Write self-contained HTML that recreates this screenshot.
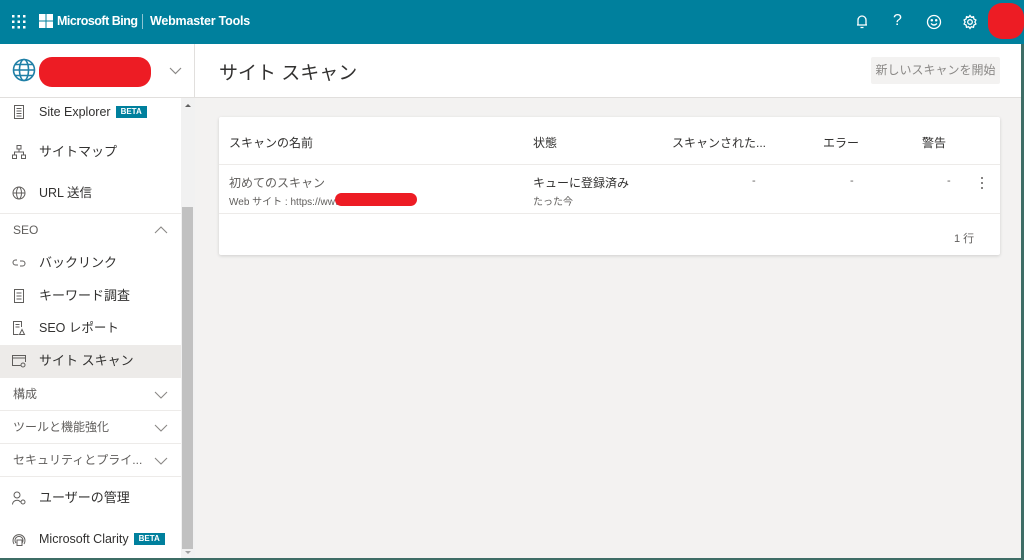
<!DOCTYPE html>
<html><head><meta charset="utf-8"><style>
*{box-sizing:border-box;margin:0;padding:0}
body{width:1024px;height:560px;overflow:hidden;font-family:"Liberation Sans","Noto Sans CJK JP",sans-serif;background:#f3f2f1;position:relative;color:#323130}
.hdr{position:absolute;left:0;top:0;width:1024px;height:44px;background:#00809d;color:#fff}
.abs{position:absolute}
.side{position:absolute;left:0;top:44px;width:195px;height:516px;background:#fff;border-right:1px solid #e1dfdd}
.sub{position:absolute;left:195px;top:44px;width:829px;height:54px;background:#fff;border-bottom:1px solid #e1dfdd}
.item{position:absolute;left:0;width:181px;height:18px;font-size:12.5px;line-height:18px;color:#323130}
.item .ic{position:absolute;left:12px;top:2px;width:14px;height:14px}
.item .t{position:absolute;left:39px;top:0;white-space:nowrap}
.beta{display:inline-block;background:#00809d;color:#fff;font-size:8px;line-height:10px;font-weight:bold;padding:1px 5px;margin-left:5px;vertical-align:2px}
.sep{position:absolute;left:0;width:181px;height:1px;background:#edebe9}
.chev{position:absolute;left:154px;width:14px;height:8px}
.card{position:absolute;left:219px;top:117px;width:781px;height:138px;background:#fff;box-shadow:0 1px 3px rgba(0,0,0,.15);border-radius:2px}
.th{position:absolute;top:17px;font-size:12px;color:#323130}
.line{position:absolute;left:0;width:781px;height:1px;background:#edebe9}
</style></head><body>
<div class="hdr">
<svg class="abs" style="left:12px;top:15px" width="14" height="14" fill="#fff"><g><rect x="0" y="0" width="2.5" height="2.5"/><rect x="5.5" y="0" width="2.5" height="2.5"/><rect x="11" y="0" width="2.5" height="2.5"/><rect x="0" y="5.5" width="2.5" height="2.5"/><rect x="5.5" y="5.5" width="2.5" height="2.5"/><rect x="11" y="5.5" width="2.5" height="2.5"/><rect x="0" y="11" width="2.5" height="2.5"/><rect x="5.5" y="11" width="2.5" height="2.5"/><rect x="11" y="11" width="2.5" height="2.5"/></g></svg>
<svg class="abs" style="left:39px;top:14px" width="14" height="14" fill="#fff"><rect x="0" y="0" width="6.5" height="6.5"/><rect x="7.5" y="0" width="6.5" height="6.5"/><rect x="0" y="7.5" width="6.5" height="6.5"/><rect x="7.5" y="7.5" width="6.5" height="6.5"/></svg>
<div class="abs" style="left:57px;top:14px;font-size:12.5px;font-weight:bold;letter-spacing:-0.5px;white-space:nowrap">Microsoft Bing</div>
<div class="abs" style="left:142px;top:14px;width:1px;height:15px;background:#8cc4d2"></div>
<div class="abs" style="left:150px;top:14px;font-size:12.5px;font-weight:bold;letter-spacing:-0.2px;white-space:nowrap">Webmaster Tools</div>
<svg class="abs" style="left:856px;top:15px" width="12" height="14" fill="none" stroke="#fff" stroke-width="1.3"><path d="M2 10V5a4 4 0 0 1 8 0v5H2z M1 10h10 M4.5 12.5h3"/></svg>
<div class="abs" style="left:893px;top:12px;font-size:16px">?</div>
<svg class="abs" style="left:926px;top:14px" width="16" height="16" fill="none" stroke="#fff" stroke-width="1.3"><circle cx="8" cy="8" r="6.5"/><circle cx="5.8" cy="6.3" r=".6" fill="#fff"/><circle cx="10.2" cy="6.3" r=".6" fill="#fff"/><path d="M5 9.5q3 3 6 0"/></svg>
<svg class="abs" style="left:962px;top:14px" width="16" height="16" fill="none" stroke="#fff" stroke-width="1.3"><circle cx="8" cy="8" r="2.3"/><path d="M8 1.5l1.3 1.8 2.2-.6.4 2.2 2 1.1-1 2 1 2-2 1.1-.4 2.2-2.2-.6L8 14.5l-1.3-1.8-2.2.6-.4-2.2-2-1.1 1-2-1-2 2-1.1.4-2.2 2.2.6z"/></svg>
<div class="abs" style="left:988px;top:3px;width:36px;height:36px;border-radius:14px;background:#ed1c24"></div>
</div>
<div class="side">
<svg class="abs" style="left:12px;top:14px" width="24" height="24" fill="none" stroke="#1f7fa6" stroke-width="1.6"><circle cx="12" cy="12" r="10.5"/><ellipse cx="12" cy="12" rx="4.5" ry="10.5"/><path d="M1.5 12h21M3.5 6.5h17M3.5 17.5h17"/></svg>
<div class="abs" style="left:39px;top:13px;width:112px;height:30px;border-radius:13px;background:#ed1c24"></div>
<svg class="abs" style="left:169px;top:23px" width="13" height="8" fill="none" stroke="#8a8886" stroke-width="1.2"><path d="M1 1l5.5 5.5L12 1"/></svg>
<div class="abs" style="left:0;top:53px;width:195px;height:1px;background:#e1dfdd"></div>
<div class="abs" style="left:181px;top:54px;width:14px;height:462px;background:#f1f1f1"></div>
<div class="abs" style="left:182px;top:163px;width:11px;height:342px;background:#c1c1c1"></div>
<div class="abs" style="left:185px;top:57px;width:0;height:0;border:3px solid transparent;border-bottom:3px solid #606060"></div>
<div class="abs" style="left:185px;top:507px;width:0;height:0;border:3px solid transparent;border-top:3px solid #a0a0a0"></div>

<div class="item" style="top:59px"><svg class="ic" fill="none" stroke="#605e5c"><rect x="2.5" y=".5" width="9" height="13"/><path d="M4.5 3.5h5M4.5 6h5M4.5 8.5h5M4.5 11h5"/></svg><span class="t">Site Explorer<span class="beta">BETA</span></span></div>
<div class="item" style="top:99px"><svg class="ic" fill="none" stroke="#605e5c"><rect x="5" y=".5" width="4" height="3.5"/><rect x=".5" y="10" width="4" height="3.5"/><rect x="9.5" y="10" width="4" height="3.5"/><path d="M7 4v3M2.5 10V7h9v3"/></svg><span class="t" style="font-size:13px">サイトマップ</span></div>
<div class="item" style="top:140px"><svg class="ic" fill="none" stroke="#605e5c"><circle cx="7" cy="7" r="6"/><ellipse cx="7" cy="7" rx="2.5" ry="6"/><path d="M1 7h12"/></svg><span class="t">URL 送信</span></div>
<div class="sep" style="top:169px"></div>
<div class="item" style="top:177px;color:#605e5c;font-size:12px"><span class="t" style="left:13px">SEO</span></div>
<svg class="chev" style="top:182px" fill="none" stroke="#8a8886" stroke-width="1.1"><path d="M1 7l6-6 6 6"/></svg>
<div class="item" style="top:210px"><svg class="ic" fill="none" stroke="#605e5c"><path d="M5 4H3.5a2.5 2.5 0 0 0 0 5H6M8 5h2.5a2.5 2.5 0 0 1 0 5H8"/></svg><span class="t" style="font-size:13px">バックリンク</span></div>
<div class="item" style="top:243px"><svg class="ic" fill="none" stroke="#605e5c"><rect x="2.5" y=".5" width="9" height="13"/><path d="M4.5 4h5M4.5 7h5M4.5 10h5"/></svg><span class="t" style="font-size:13px">キーワード調査</span></div>
<div class="item" style="top:275px"><svg class="ic" fill="none" stroke="#605e5c"><path d="M9.5 6V.5h-8v13h5M3.5 3.5h4M3.5 6h4"/><path d="M7.5 13.5l2.5-5 2.5 5z"/></svg><span class="t">SEO レポート</span></div>
<div class="abs" style="left:0;top:301px;width:181px;height:33px;background:#edebe9"></div>
<div class="item" style="top:308px"><svg class="ic" fill="none" stroke="#605e5c"><path d="M13.5 8V1.5H.5v10h8M.5 4h13"/><circle cx="11" cy="11" r="2"/></svg><span class="t" style="font-size:13px">サイト スキャン</span></div>
<div class="item" style="top:341px;color:#605e5c;font-size:12px"><span class="t" style="left:13px">構成</span></div>
<svg class="chev" style="top:347px" fill="none" stroke="#8a8886" stroke-width="1.1"><path d="M1 1l6 6 6-6"/></svg>
<div class="sep" style="top:366px"></div>
<div class="item" style="top:374px;color:#605e5c;font-size:12px"><span class="t" style="left:13px">ツールと機能強化</span></div>
<svg class="chev" style="top:380px" fill="none" stroke="#8a8886" stroke-width="1.1"><path d="M1 1l6 6 6-6"/></svg>
<div class="sep" style="top:399px"></div>
<div class="item" style="top:407px;color:#605e5c;font-size:12px"><span class="t" style="left:13px">セキュリティとプライ...</span></div>
<svg class="chev" style="top:413px" fill="none" stroke="#8a8886" stroke-width="1.1"><path d="M1 1l6 6 6-6"/></svg>
<div class="sep" style="top:432px"></div>
<div class="item" style="top:445px"><svg class="ic" fill="none" stroke="#605e5c"><circle cx="5" cy="4" r="3"/><path d="M.5 13.5a4.5 4.5 0 0 1 8-2.5"/><circle cx="11" cy="11" r="2"/></svg><span class="t" style="font-size:13px">ユーザーの管理</span></div>
<div class="item" style="top:486px"><svg class="ic" fill="none" stroke="#605e5c"><path d="M2 12A6 6 0 1 1 12 12M4 11a4 4 0 1 1 6 0"/><rect x="5" y="8" width="5" height="5.5"/></svg><span class="t">Microsoft Clarity<span class="beta">BETA</span></span></div>
</div>
<div class="sub">
<div class="abs" style="left:24px;top:14px;font-size:19px;color:#323130">サイト スキャン</div>
<div class="abs" style="left:676px;top:13px;width:129px;height:27px;background:#f3f2f1;border-radius:2px;color:#8a8886;font-size:12px;text-align:center;line-height:27px">新しいスキャンを開始</div>
</div>
<div class="card">
<div class="th" style="left:10px">スキャンの名前</div>
<div class="th" style="left:314px">状態</div>
<div class="th" style="left:453px">スキャンされた...</div>
<div class="th" style="left:604px">エラー</div>
<div class="th" style="left:703px">警告</div>
<div class="line" style="top:47px"></div>
<div class="abs" style="left:10px;top:57px;font-size:12px;color:#605e5c">初めてのスキャン</div>
<div class="abs" style="left:10px;top:76px;font-size:10px;color:#605e5c">Web サイト : https://www.</div>
<div class="abs" style="left:116px;top:76px;width:82px;height:13px;border-radius:7px;background:#ed1c24"></div>
<div class="abs" style="left:314px;top:57px;font-size:12px;color:#323130">キューに登録済み</div>
<div class="abs" style="left:314px;top:76px;font-size:10px;color:#605e5c">たった今</div>
<div class="abs" style="left:533px;top:58px;font-size:11px;color:#605e5c">-</div>
<div class="abs" style="left:631px;top:58px;font-size:11px;color:#605e5c">-</div>
<div class="abs" style="left:728px;top:58px;font-size:11px;color:#605e5c">-</div>
<svg class="abs" style="left:761px;top:59px" width="4" height="14" fill="#605e5c"><circle cx="2" cy="2" r="1"/><circle cx="2" cy="7" r="1"/><circle cx="2" cy="12" r="1"/></svg>
<div class="line" style="top:96px"></div>
<div class="abs" style="left:735px;top:113px;font-size:11px;color:#605e5c">1 行</div>
</div>
<div class="abs" style="left:1021px;top:44px;width:3px;height:516px;background:#3e6d66"></div>
<div class="abs" style="left:0;top:558px;width:1024px;height:2px;background:#3e6d66"></div>
</body></html>
